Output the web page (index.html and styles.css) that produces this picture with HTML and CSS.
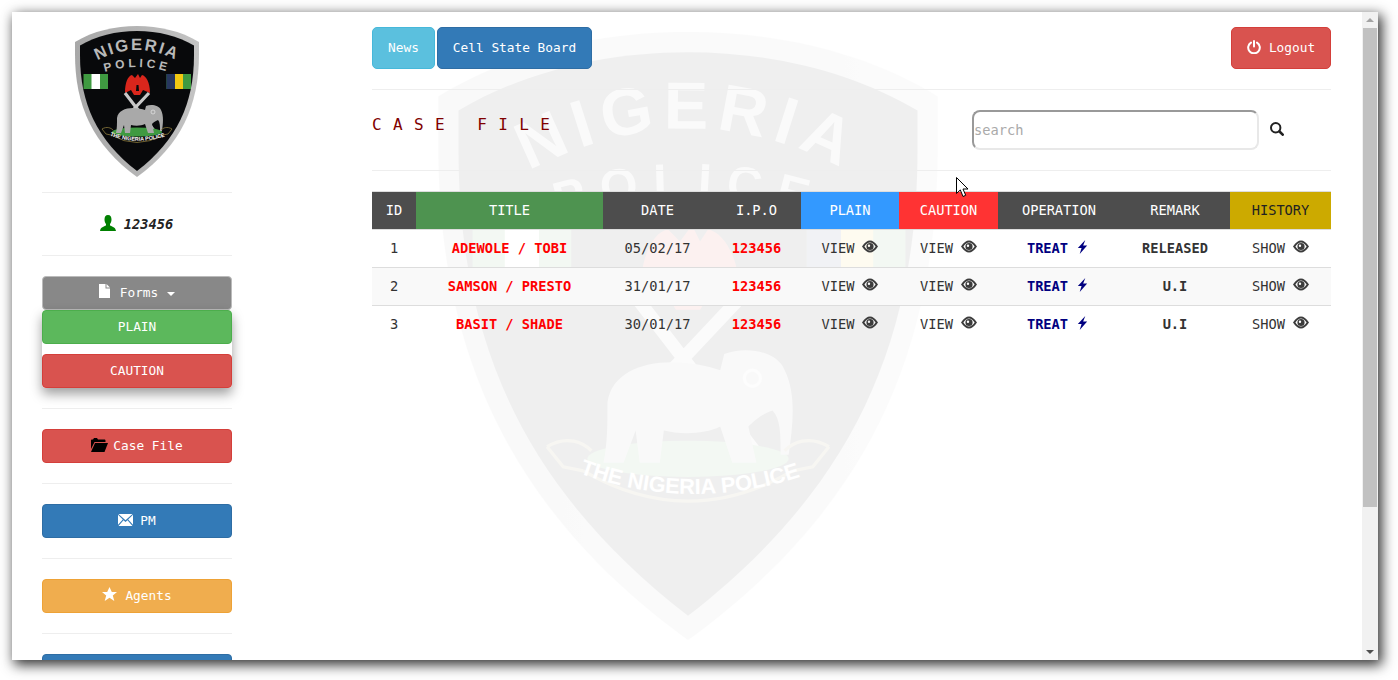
FILE: index.html
```html
<!DOCTYPE html>
<html lang="en">
<head>
<meta charset="utf-8">
<title>Case File</title>
<link rel="stylesheet" href="styles.css">
</head>
<body>
<svg class="defs" width="0" height="0" aria-hidden="true">
  <defs>
    <linearGradient id="rim" x1="0" y1="0" x2="1" y2="0">
      <stop offset="0" stop-color="#a8a8a8"/>
      <stop offset=".5" stop-color="#b4b4b4"/>
      <stop offset="1" stop-color="#c4c4c4"/>
    </linearGradient>
    <path id="arc1" d="M18 37 Q62 11 106 37"/>
    <path id="arc2" d="M24 48 Q62 34 100 48"/>
    <path id="arc3" d="M31 108 Q62 121 94 109"/>
    <symbol id="shield" viewBox="0 0 124 151">
      <path fill="url(#rim)" d="M62 0C84 0 106 5 124 16L124 28C124 80 106 119 62 151C18 119 0 80 0 28L0 16C18 5 40 0 62 0Z"/>
      <path fill="#08090b" d="M62 5C83 5 103 10 119 19.500L119 29C119 78 102 114 62 145C22 114 5 78 5 29L5 19.500C21 10 41 5 62 5Z"/>
      <text font-family="Liberation Sans" font-weight="700" font-size="16.500" fill="#b9b9b9" letter-spacing="2" text-anchor="middle"><textPath href="#arc1" startOffset="50%">NIGERIA</textPath></text>
      <text font-family="Liberation Sans" font-weight="700" font-size="12" fill="#b9b9b9" letter-spacing="3.500" text-anchor="middle"><textPath href="#arc2" startOffset="50%">POLICE</textPath></text>
      <rect x="8.500" y="48" width="24.500" height="15" fill="#3f9a41"/>
      <rect x="16.500" y="48" width="8.500" height="15" fill="#fff"/>
      <rect x="91.500" y="48" width="24.500" height="15" fill="#3f9a41"/>
      <rect x="91.500" y="48" width="8.500" height="15" fill="#27375f"/>
      <rect x="100" y="48" width="8" height="15" fill="#f2c811"/>
      <path fill="#d9261c" d="M63 48L60 52L57 49C53 50 50 56 50 67L56 64L59 69H65L68 64L75 67C75 56 71 50 67 49L65 52Z"/>
      <path fill="#08090b" d="M61.500 59H63.500L64 65H61Z"/>
      <path fill="none" stroke="#c8c8c8" stroke-width="3.200" d="M50 67L80 106M74 67L58 84"/>
      <ellipse cx="62" cy="106" rx="25" ry="4.500" fill="#3f9a41"/>
      <path fill="#a9a9a9" d="M42 92C43 85 50 82 58 82C63 82 67 83 70 84L71 80C76 78 84 79 86 84C89 90 88 98 87 105L85 105C85 100 85 96 83 94C80 95 78 97 77 98L79 107L73 107L70 98C66 100 60 100 56 99L55 107L50 107L49 99L46 107L41 107C42 102 42 98 42 92Z"/>
      <circle cx="78" cy="86" r="2" fill="none" stroke="#e0e0e0" stroke-width=".8"/>
      <path fill="none" stroke="#8b7a3c" stroke-width=".8" d="M27 103C32 100 36 102 38 104M97 103C92 100 88 102 86 104M27 103L31 108L36 109M97 103L93 108L88 109M36 109Q62 124 88 109"/>
      <text font-family="Liberation Sans" font-weight="700" font-size="5.400" fill="#fff" text-anchor="middle"><textPath href="#arc3" startOffset="50%">THE NIGERIA POLICE</textPath></text>
    </symbol>
    <symbol id="i-eye" viewBox="0 0 16 13">
      <path fill-rule="evenodd" d="M0 6.500C2.800 2.200 5.400 .5 8 .5C10.600 .5 13.200 2.200 16 6.500C13.200 10.800 10.600 12.500 8 12.500C5.400 12.500 2.800 10.800 0 6.500ZM2.400 6.500C4.200 9.200 6 10.400 8 10.400C10 10.400 11.800 9.200 13.600 6.500C11.800 3.800 10 2.600 8 2.600C6 2.600 4.200 3.800 2.400 6.500ZM8 2.900A3.600 3.600 0 1 1 8 10.100A3.600 3.600 0 1 1 8 2.900ZM7 4.600A1.200 1.200 0 1 0 7 7A1.200 1.200 0 1 0 7 4.600Z"/>
    </symbol>
    <symbol id="i-flash" viewBox="0 0 11 15">
      <path d="M8.500 0L.5 8.500H4.500L2.500 15L10.500 5.800H6.200L8.500 0Z"/>
    </symbol>
    <symbol id="i-user" viewBox="0 0 16 16">
      <path d="M8 0C10.500 0 11.500 2 11.500 4.500C11.500 6.500 10.700 8 10 9V10.500C12 11.500 15.500 12 16 16H0C.5 12 4 11.500 6 10.500V9C5.300 8 4.500 6.500 4.500 4.500C4.500 2 5.500 0 8 0Z"/>
    </symbol>
    <symbol id="i-file" viewBox="0 0 11 14">
      <path d="M0 0H6.500V4.500H11V14H0Z"/><path d="M7.500 0L11 3.500H7.500Z"/>
    </symbol>
    <symbol id="i-folder" viewBox="0 0 17 14">
      <path d="M0 11V2.500C0 2 .4 1.500 1 1.500H2L3 0H6L7 1.500H13.500C14 1.500 14.500 2 14.500 2.500V4H3.500L0 11Z"/><path d="M4 5H17L13.500 14H0Z"/>
    </symbol>
    <symbol id="i-mail" viewBox="0 0 15 12">
      <path d="M.5 0H14.500L7.500 6.200Z"/><path d="M0 .8L4.800 5.500L0 10.800Z"/><path d="M15 .8L10.200 5.500L15 10.800Z"/><path d="M5.500 6.200L7.500 8L9.500 6.200L14.500 12H.5Z"/>
    </symbol>
    <symbol id="i-star" viewBox="0 0 15 14">
      <path d="M7.500 0L9.800 5H15L10.800 8.400L12.300 14L7.500 10.800L2.700 14L4.200 8.400L0 5H5.200Z"/>
    </symbol>
    <symbol id="i-power" viewBox="0 0 14 14">
      <path fill="none" stroke="currentColor" stroke-width="2" stroke-linecap="round" d="M4 2.600A5.800 5.800 0 1 0 10 2.600"/>
      <path fill="none" stroke="currentColor" stroke-width="2" stroke-linecap="round" d="M7 1V6.500"/>
    </symbol>
    <symbol id="i-search" viewBox="0 0 14 14">
      <path fill="none" stroke="currentColor" stroke-width="2" d="M5.700 1A4.700 4.700 0 1 0 5.700 10.400A4.700 4.700 0 1 0 5.700 1Z"/>
      <path fill="none" stroke="currentColor" stroke-width="2.600" stroke-linecap="round" d="M9.500 9.500L12.700 12.700"/>
    </symbol>
  </defs>
</svg>

<div class="window">
  <svg class="watermark" aria-hidden="true"><use href="#shield"/></svg>

  <div class="page">
    <aside class="sidebar">
      <svg class="logo"><use href="#shield"/></svg>
      <hr class="rule">
      <div class="who"><svg class="ic-user"><use href="#i-user"/></svg><span>123456</span></div>
      <hr class="rule">
      <div class="btn btn-forms gap-10"><svg class="ic-file"><use href="#i-file"/></svg><span>Forms</span><i class="caret"></i></div>
      <div class="dropdown">
        <div class="btn btn-green">PLAIN</div>
        <div class="btn btn-red">CAUTION</div>
      </div>
      <hr class="rule">
      <div class="btn btn-red gap-5"><svg class="ic-folder"><use href="#i-folder"/></svg><span>Case File</span></div>
      <hr class="rule">
      <div class="btn btn-blue gap-7"><svg class="ic-mail"><use href="#i-mail"/></svg><span>PM</span></div>
      <hr class="rule">
      <div class="btn btn-amber gap-8"><svg class="ic-star"><use href="#i-star"/></svg><span>Agents</span></div>
      <hr class="rule">
      <div class="btn btn-blue">&nbsp;</div>
    </aside>

    <main class="main">
      <div class="topbar">
        <div class="btn btn-cyan btn-tall btn-news">News</div>
        <div class="btn btn-blue btn-tall btn-board">Cell State Board</div>
        <div class="btn btn-red btn-tall btn-logout gap-8"><svg class="ic-power"><use href="#i-power"/></svg><span>Logout</span></div>
      </div>
      <hr class="rule">
      <div class="titlebar">
        <h3 class="title">CASE FILE</h3>
        <form class="search">
          <input class="search-input" type="text" placeholder="search">
          <svg class="ic-search"><use href="#i-search"/></svg>
        </form>
      </div>
      <hr class="rule">
      <table class="cases">
        <thead>
          <tr>
            <th class="c-id">ID</th>
            <th class="c-title">TITLE</th>
            <th class="c-date">DATE</th>
            <th class="c-ipo">I.P.O</th>
            <th class="c-plain">PLAIN</th>
            <th class="c-caution">CAUTION</th>
            <th class="c-op">OPERATION</th>
            <th class="c-remark">REMARK</th>
            <th class="c-history">HISTORY</th>
          </tr>
        </thead>
        <tbody>
          <tr>
            <td>1</td><td class="red">ADEWOLE / TOBI</td><td>05/02/17</td><td class="red">123456</td>
            <td>VIEW<svg class="ic-eye"><use href="#i-eye"/></svg></td>
            <td>VIEW<svg class="ic-eye"><use href="#i-eye"/></svg></td>
            <td class="navy">TREAT<svg class="ic-flash"><use href="#i-flash"/></svg></td>
            <td class="bold">RELEASED</td>
            <td>SHOW<svg class="ic-eye"><use href="#i-eye"/></svg></td>
          </tr>
          <tr>
            <td>2</td><td class="red">SAMSON / PRESTO</td><td>31/01/17</td><td class="red">123456</td>
            <td>VIEW<svg class="ic-eye"><use href="#i-eye"/></svg></td>
            <td>VIEW<svg class="ic-eye"><use href="#i-eye"/></svg></td>
            <td class="navy">TREAT<svg class="ic-flash"><use href="#i-flash"/></svg></td>
            <td class="bold">U.I</td>
            <td>SHOW<svg class="ic-eye"><use href="#i-eye"/></svg></td>
          </tr>
          <tr>
            <td>3</td><td class="red">BASIT / SHADE</td><td>30/01/17</td><td class="red">123456</td>
            <td>VIEW<svg class="ic-eye"><use href="#i-eye"/></svg></td>
            <td>VIEW<svg class="ic-eye"><use href="#i-eye"/></svg></td>
            <td class="navy">TREAT<svg class="ic-flash"><use href="#i-flash"/></svg></td>
            <td class="bold">U.I</td>
            <td>SHOW<svg class="ic-eye"><use href="#i-eye"/></svg></td>
          </tr>
        </tbody>
      </table>
    </main>
  </div>

  <div class="scrollbar">
    <i class="arrow arrow-up"></i>
    <div class="thumb"></div>
    <i class="arrow arrow-down"></i>
  </div>

  <svg class="cursor" viewBox="0 0 13 21" aria-hidden="true">
    <path d="M.5 .5V16.500L4.300 12.900L7 19.500L9.700 18.300L7 12H12Z" fill="#fff" stroke="#000" stroke-width="1"/>
  </svg>
</div>
</body>
</html>
```

FILE: styles.css
```css
* { box-sizing: border-box; }

html, body {
  margin: 0;
  height: 680px;
  overflow: hidden;
  background: #fff;
}

body {
  font-family: "DejaVu Sans Mono", "Liberation Mono", monospace;
  font-size: 12.8px;
  color: #333;
}

.defs { position: absolute; }

.window {
  position: relative;
  display: flex;
  width: 1366px;
  height: 648px;
  margin: 12px;
  overflow: hidden;
  background: #fff;
  box-shadow: 3px 4px 12px 1px rgba(0, 0, 0, .8);
}

.watermark {
  position: absolute;
  left: 425px;
  top: 20px;
  width: 502px;
  height: 608px;
  opacity: .06;
}

.page {
  position: relative;
  display: flex;
  flex: 1;
  min-width: 0;
  gap: 140px;
  padding: 14px 0 0 30px;
}

.sidebar {
  flex: 0 0 190px;
  display: flex;
  flex-direction: column;
}

.logo {
  display: block;
  flex: none;
  width: 124px;
  height: 151px;
  margin: 0 0 15px 33px;
}

.rule {
  flex: none;
  width: 100%;
  height: 1px;
  margin: 0 0 20px;
  border: 0;
  background: #eee;
}

.sidebar .btn + .rule,
.dropdown + .rule { margin-top: 20px; }

.who {
  flex: none;
  display: flex;
  align-items: center;
  justify-content: center;
  gap: 8px;
  height: 22px;
  margin-bottom: 20px;
  padding-right: 1px;
  font-size: 13.7px;
  font-weight: 700;
  font-style: italic;
  color: #222;
}

.ic-user { width: 16px; height: 16px; margin-top: -2px; fill: #008000; }

.btn {
  flex: none;
  display: flex;
  align-items: center;
  justify-content: center;
  height: 34px;
  padding-bottom: 2px;
  border: 1px solid transparent;
  border-radius: 4px;
  color: #fff;
}

.btn-tall { height: 42px; border-radius: 5px; }

.btn-green { background: #5cb85c; border-color: #4cae4c; }
.btn-red   { background: #d9534f; border-color: #d43f3a; }
.btn-blue  { background: #337ab7; border-color: #2e6da4; }
.btn-amber { background: #f0ad4e; border-color: #eea236; }
.btn-cyan  { background: #5bc0de; border-color: #46b8da; }
.btn-forms { background: #888; border-color: #bbb; }

.gap-5 { gap: 5px; }
.gap-7 { gap: 7px; }
.gap-8 { gap: 8px; }
.gap-10 { gap: 10px; }

.ic-file { width: 11px; height: 14px; margin-top: -3px; fill: #fff; }
.ic-folder { width: 17px; height: 14px; margin-top: 0; fill: #000; }
.ic-mail { width: 15px; height: 12px; margin-top: -1px; fill: #fff; }
.ic-star { width: 15px; height: 14px; margin-top: -2px; fill: #fff; }
.ic-power { width: 14px; height: 14px; margin-top: -1px; color: #fff; }

.caret {
  width: 0;
  height: 0;
  margin: 4px 0 0 -1px;
  border-top: 4px solid #fff;
  border-left: 4px solid transparent;
  border-right: 4px solid transparent;
}

.dropdown {
  flex: none;
  display: flex;
  flex-direction: column;
  gap: 10px;
  background: #fff;
  border-radius: 4px;
  box-shadow: 0 6px 12px rgba(0, 0, 0, .38);
}

.main {
  flex: 0 0 959px;
  display: flex;
  flex-direction: column;
  padding-top: 1px;
}

.topbar {
  flex: none;
  display: flex;
  gap: 2px;
  margin-bottom: 20px;
}

.btn-news { width: 63px; }
.btn-board { width: 155px; }
.btn-logout { width: 100px; margin-left: auto; }

.titlebar {
  flex: none;
  display: flex;
  align-items: flex-start;
  justify-content: space-between;
  height: 60px;
}

.title {
  margin: 0;
  padding-top: 5px;
  font-size: 16px;
  line-height: 20px;
  font-weight: 400;
  letter-spacing: 11.4px;
  color: #800000;
}

.search {
  display: flex;
  align-items: center;
  gap: 11px;
  margin: 0 47px 0 0;
}

.search-input {
  width: 287px;
  height: 40px;
  padding: 0;
  border: 2px solid;
  border-color: #999 #e8e8e8 #e8e8e8 #999;
  border-radius: 8px;
  outline: 0;
  background: transparent;
  font: 13.7px "DejaVu Sans Mono", monospace;
  color: #333;
}

.search-input::placeholder { color: #aaa; opacity: 1; }

.ic-search { width: 14px; height: 14px; margin-top: -2px; color: #222; }

.cases {
  flex: none;
  width: 959px;
  table-layout: fixed;
  border-collapse: separate;
  border-spacing: 0;
  font-size: 13.7px;
  text-align: center;
}

.cases th {
  height: 38px;
  padding: 0 0 2px;
  border-top: 1px solid #ddd;
  font-weight: 400;
  color: #fff;
  background: #4d4d4d;
  background-clip: padding-box;
}

.cases td {
  height: 38px;
  padding: 0 0 2px;
  border-top: 1px solid #ddd;
  white-space: nowrap;
}

.cases tbody tr:nth-child(2) td { background: #f9f9f9; }

.c-id { width: 44px; }
.c-title { width: 187px; }
.c-date { width: 109px; }
.c-ipo { width: 89px; }
.c-plain { width: 98px; }
.c-caution { width: 99px; }
.c-op { width: 122px; }
.c-remark { width: 110px; }
.c-history { width: 101px; }

.cases th.c-title { background-color: #4e9350; }
.cases th.c-plain { background-color: #3399ff; }
.cases th.c-caution { background-color: #ff3333; }
.cases th.c-history { background-color: #ccaa00; color: #222; }

.red { color: #f00; font-weight: 700; }
.bold { font-weight: 700; color: #333; }
.navy { color: #000080; font-weight: 700; }
.cases td.navy { padding-right: 3px; }

.ic-eye {
  width: 16px;
  height: 13px;
  margin-left: 8px;
  vertical-align: 0;
  fill: #3c3c3c;
}

.ic-flash {
  width: 11px;
  height: 14px;
  margin-left: 9px;
  vertical-align: -1px;
  fill: #000080;
}

.scrollbar {
  flex: 0 0 16px;
  position: relative;
  display: flex;
  flex-direction: column;
  align-items: center;
  justify-content: space-between;
  background: #f1f1f1;
}

.thumb {
  position: absolute;
  left: 1px;
  top: 16px;
  width: 14px;
  height: 479px;
  background: #c1c1c1;
}

.arrow {
  width: 0;
  height: 0;
  margin: 6px 0;
  border-left: 4px solid transparent;
  border-right: 4px solid transparent;
}

.arrow-up { border-bottom: 4px solid #a3a3a3; }
.arrow-down { border-top: 4px solid #505050; }

.cursor {
  position: absolute;
  left: 944px;
  top: 165px;
  width: 13px;
  height: 21px;
}
```
